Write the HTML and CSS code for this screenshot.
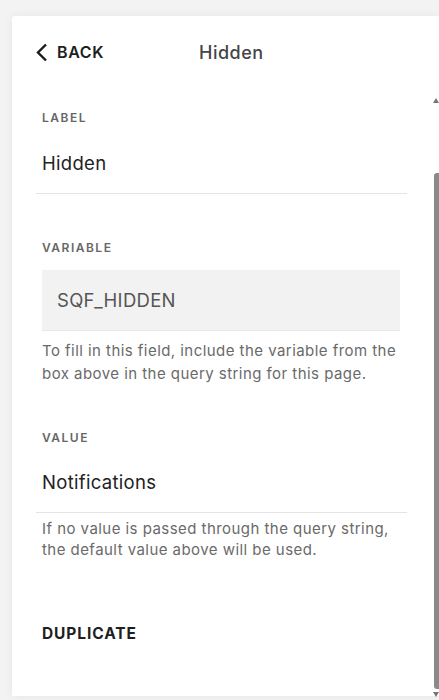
FILE: index.html
```html
<!DOCTYPE html>
<html>
<head>
<meta charset="utf-8">
<link rel="stylesheet" href="styles.css">
</head>
<body>
<div class="panel">
  <header class="topbar">
    <div class="back">
      <svg class="chev" width="13" height="19" viewBox="0 0 13 19"><path d="M11 1.5 L3 9.5 L11 17.5" fill="none" stroke="#1a1a1a" stroke-width="2.4"/></svg>
      <span>BACK</span>
    </div>
    <div class="title">Hidden</div>
  </header>
  <div class="content">
    <section class="field">
      <div class="label">LABEL</div>
      <div class="value">Hidden</div>
    </section>
    <section class="field var">
      <div class="label">VARIABLE</div>
      <div class="box">SQF_HIDDEN</div>
      <p class="help">To fill in this field, include the variable from the box above in the query string for this page.</p>
    </section>
    <section class="field val">
      <div class="label">VALUE</div>
      <div class="value">Notifications</div>
      <p class="help">If no value is passed through the query string, the default value above will be used.</p>
    </section>
    <div class="dup">DUPLICATE</div>
  </div>
  <div class="scroll">
    <div class="arrow up"></div>
    <div class="thumb"></div>
    <div class="arrow down"></div>
  </div>
</div>
</body>
</html>
```
FILE: styles.css
```css
* { box-sizing: border-box; }
html, body { margin: 0; padding: 0; }
body {
  background: #f3f3f3;
  font-family: Inter, "Open Sans", sans-serif;
  width: 439px;
  height: 700px;
  overflow: hidden;
  padding: 16px 0 0 12px;
}
.panel {
  position: relative;
  background: #fff;
  height: 680px;
  box-shadow: 0 0 8px rgba(0,0,0,0.06);
  border-radius: 3px 0 0 0;
}
.topbar {
  display: flex;
  align-items: center;
  height: 72px;
  padding: 0 0 0 23px;
}
.back {
  display: flex;
  align-items: center;
  gap: 9px;
  font-size: 16px;
  font-weight: 600;
  color: #1e1e1e;
  letter-spacing: 0.6px;
  width: 164px;
}
.title {
  font-size: 18px;
  font-weight: 500;
  color: #454545;
  letter-spacing: 0.5px;
}
.content {
  padding: 0 39px 0 30px;
}
.field {
  padding-top: 23px;
}
.label {
  font-size: 12px;
  font-weight: 600;
  letter-spacing: 1.5px;
  color: #666;
  line-height: 14px;
}
.value {
  font-size: 18.5px;
  color: #222;
  line-height: 22px;
  letter-spacing: 0.3px;
  padding: 27px 0 19px 6px;
  border-bottom: 1px solid #e4e4e4;
  margin-left: -6px;
  margin-right: -7px;
}
.var { padding-top: 47px; }
.var .box {
  margin-top: 15px;
  height: 61px;
  background: #f2f2f2;
  border-bottom: 1px solid #e8e8e8;
  display: flex;
  align-items: center;
  padding-left: 15px;
  font-size: 18.5px;
  letter-spacing: 0.3px;
  color: #555;
}
.help {
  margin: 8px -10px 0 0;
  font-size: 15px;
  line-height: 23px;
  letter-spacing: 0.45px;
  color: #6a6a6a;
}
.val { padding-top: 46px; }
.val .value { padding-top: 26px; padding-bottom: 19px; }
.val .help { margin-top: 5px; line-height: 21px; }
.dup {
  margin-top: 64px;
  font-size: 15.5px;
  font-weight: 700;
  letter-spacing: 0.9px;
  color: #1e1e1e;
}
.scroll {
  position: absolute;
  right: 0;
  top: 82px;
  width: 6px;
  height: 600px;
  display: flex;
  flex-direction: column;
  align-items: center;
}
.arrow {
  width: 0; height: 0;
  border-left: 3px solid transparent;
  border-right: 3px solid transparent;
}
.arrow.up { border-bottom: 5px solid #777; }
.arrow.down { border-top: 5px solid #777; }
.thumb {
  width: 5px;
  margin-top: 70px;
  height: 516px;
  background: #8a8a8a;
  border-radius: 3px 0 0 3px;
  margin-bottom: 3px;
}
```
